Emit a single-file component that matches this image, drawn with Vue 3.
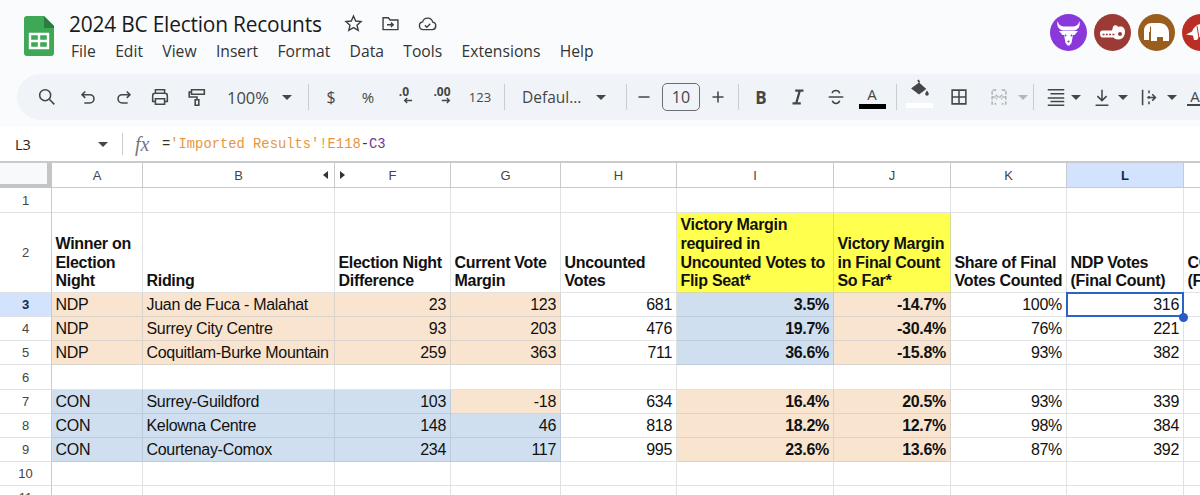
<template>
  <div class="page">
    <header class="top">
      <svg class="logo" viewBox="0 0 30 40">
        <path d="M3 0h17l10 10v27a3 3 0 0 1-3 3H3a3 3 0 0 1-3-3V3a3 3 0 0 1 3-3z" fill="#3fa856" />
        <path d="M20 0l10 10v2H20z" fill="#2a7d40" />
        <path d="M6 18h18v14H6z" fill="none" stroke="#fff" stroke-width="2.4" />
        <path d="M6 25h18M15 18v14" stroke="#fff" stroke-width="2.4" />
      </svg>
      <div class="doc">
        <div class="title-row">
          <span class="title">2024 BC Election Recounts</span>
          <svg class="doc-icon first" viewBox="0 0 24 24"><path d="M12 3.5l2.5 5.7 6.1.6-4.6 4.1 1.4 6-5.4-3.2-5.4 3.2 1.4-6-4.6-4.1 6.1-.6z" /></svg>
          <svg class="doc-icon" viewBox="0 0 24 24"><path d="M3.5 19V5.5h6l2 2.5h9v11zM8 13.5h7M12.5 11l2.6 2.5-2.6 2.5" /></svg>
          <svg class="doc-icon" viewBox="0 0 24 24"><path d="M7 19a4.5 4.5 0 0 1-.6-8.9A6 6 0 0 1 18 10.5a4.3 4.3 0 0 1-.5 8.500zM9 14l2.200 2.200 4-4" /></svg>
        </div>
        <nav class="menu">
          <span v-for="item in menuItems" :key="item">{{ item }}</span>
        </nav>
      </div>
      <div class="avatars">
        <span class="avatar bull">
          <svg viewBox="0 0 37 37">
            <path d="M7.500 7c-1 5 1 9 6 9.500h10c5-.5 7-4.500 6-9.500-1 3.500-3 5-6 5.500h-10c-3-.5-5-2-6-5.500z" fill="#fff" />
            <path d="M9 17h19l-3.500 4h-1.500l-1.500 8-2 2.500h-2l-2-2.500-1.500-8h-1.500z" fill="#fff" />
            <circle cx="15.500" cy="21.500" r="1" fill="#8a38dc" />
            <circle cx="21.500" cy="21.500" r="1" fill="#8a38dc" />
            <circle cx="18.500" cy="27.500" r="1.100" fill="#8a38dc" />
          </svg>
        </span>
        <span class="avatar croc">
          <svg viewBox="0 0 37 37">
            <path d="M6 19c0-1.500 1-2.500 2.500-2.500H18l1-3.500c.5-2 3-2.500 4.500-1l1 1c3-1.500 6.500.5 6.500 4.500 0 5-3 8-6.500 8-2.500 0-4-1-5-2H8.500C7 24 6 22 6 19z" fill="#fff" />
            <path d="M8.500 20.500h13" stroke="#9c3a35" stroke-width="1.600" stroke-dasharray="2 1.300" />
            <circle cx="26" cy="20" r="2" fill="#9c3a35" />
          </svg>
        </span>
        <span class="avatar eleph">
          <svg viewBox="0 0 37 37">
            <path d="M6 26V17c0-5 3-8 8-8h7c6 0 10 4 10 10v8h-6v-4h-6v4h-6v-9h-2v8z" fill="#fff" />
            <path d="M12.500 12.500v6" stroke="#9b5d1e" stroke-width="1.100" />
          </svg>
        </span>
        <span class="avatar arma">
          <svg viewBox="0 0 37 37">
            <path d="M4 20.500l6-3c2-5 6-8 12-8 6 0 10 4 11 11l-3 5.500h-3l-2-3h-8l-2 3h-3l-1-4.500z" fill="#fff" />
            <path d="M15 12l2 12M21 10.500l1 13" stroke="#b92f25" stroke-width="1" />
          </svg>
        </span>
      </div>
    </header>

    <div class="toolbar">
      <span class="tb after5"><svg viewBox="0 0 24 24"><circle cx="10" cy="10" r="6" /><path d="M14.500 14.500L20 20" /></svg></span>
      <span class="tb"><svg viewBox="0 0 24 24"><path d="M9 6L5.500 9.500 9 13M5.500 9.500H14a4.500 4.500 0 0 1 0 9H8" /></svg></span>
      <span class="tb"><svg viewBox="0 0 24 24"><path d="M15 6l3.500 3.500L15 13M18.500 9.500H10a4.500 4.500 0 0 0 0 9h6" /></svg></span>
      <span class="tb"><svg viewBox="0 0 24 24"><path d="M7 8V4h10v4M7 17H4v-6.500A2.500 2.500 0 0 1 6.500 8h11a2.500 2.500 0 0 1 2.500 2.500V17h-3M7 14h10v6H7z" /></svg></span>
      <span class="tb after1"><svg viewBox="0 0 24 24"><path d="M6 4h14v5H6zM6 6.500H3.500V12H12v3M10 15h4v6h-4z" /></svg></span>
      <span class="zoom"><span>100%</span><i class="caret"></i></span>
      <i class="sep"></i>
      <span class="tb txt dollar">$</span>
      <span class="tb txt pct">%</span>
      <span class="tb dec">
        <b>.0</b>
        <svg viewBox="0 0 12 8"><path d="M11 4H2M5 1L2 4l3 3" /></svg>
      </span>
      <span class="tb dec dec2">
        <b>.00</b>
        <svg viewBox="0 0 12 8"><path d="M1 4h9M7 1l3 3-3 3" /></svg>
      </span>
      <span class="tb txt num123">123</span>
      <i class="sep wide"></i>
      <span class="font-pick"><span>Defaul...</span><i class="caret"></i></span>
      <i class="sep"></i>
      <span class="tb narrow"><svg viewBox="0 0 24 24"><path d="M6 12h12" /></svg></span>
      <span class="size">10</span>
      <span class="tb plus"><svg viewBox="0 0 24 24"><path d="M6 12h12M12 6v12" /></svg></span>
      <i class="sep"></i>
      <span class="tb txt bold-b">B</span>
      <span class="tb italic"><svg class="heavy" viewBox="0 0 24 24"><path d="M9 5h9M6 19h9M14 5l-4 14" /></svg></span>
      <span class="tb strike"><svg viewBox="0 0 24 24"><path d="M4 12h16M16 8c-.5-2-2-3-4-3s-4 1-4 3M8 16c.5 2 2 3 4 3s3.500-1 4-3" /></svg></span>
      <span class="tb text-color"><span>A</span><i></i></span>
      <i class="sep wide"></i>
      <span class="tb fill">
        <svg viewBox="0 0 24 20"><path d="M11 1l1.500 2.500M5.500 9.500L12 4.500l6 5.500-6 4.500z" fill="#444746" /><path d="M20 11.500c1 1.500 1.800 2.500 1.800 3.500a1.800 1.800 0 0 1-3.600 0c0-1 .8-2 1.800-3.500z" fill="#444746" stroke="none" /></svg>
        <i></i>
      </span>
      <span class="tb gap4"><svg viewBox="0 0 24 24"><path d="M4.500 4.500h15v15h-15zM12 4.500v15M4.500 12h15" /></svg></span>
      <span class="tb off"><svg viewBox="0 0 24 24"><path d="M9 4.500H4.500v15H9M15 4.500h4.500v15H15M4.500 12H11M8.500 9.500L11 12l-2.500 2.500M19.500 12H13M15.500 9.500L13 12l2.500 2.500" stroke-dasharray="4 1.500" /></svg></span>
      <i class="caret off-caret"></i>
      <i class="sep"></i>
      <span class="tb align"><svg viewBox="0 0 24 24"><path d="M3 4h18M6 8.500h15M3 13h18M6 17h15M3 21h18" /></svg></span>
      <i class="caret after-align"></i>
      <span class="tb mid"><svg viewBox="0 0 24 24"><path d="M12 4v12M7 11l5 5 5-5M5 21h14" /></svg></span>
      <i class="caret"></i>
      <span class="tb mid wrap-icon"><svg viewBox="0 0 24 24"><path d="M5 4v17M12 5v3M12 11v3M12 17v3M10 12.500h9M15.500 9l3.500 3.500-3.500 3.500" /></svg></span>
      <i class="caret after-wrap"></i>
      <span class="tb text-rotate"><span>A</span><i></i></span>
    </div>

    <div class="formula">
      <span class="name-box">L3</span>
      <i class="caret"></i>
      <i class="sep"></i>
      <span class="fx">fx</span>
      <code class="expr">=<span class="str">'Imported Results'!E118</span>-<span class="ref">C3</span></code>
    </div>

    <div class="sheet">
      <div class="grid">
        <div class="corner"></div>
        <div
          v-for="col in columns"
          :key="col"
          class="col-head"
          :class="{ picked: col === 'L' }"
        >
          {{ col }}
          <i v-if="col === 'B'" class="hide-arrow left"></i>
          <i v-if="col === 'F'" class="hide-arrow right"></i>
        </div>

        <template v-for="row in rows" :key="row.num">
          <div class="row-head" :class="{ picked: row.num === 3 }">{{ row.num }}</div>
          <div
            v-for="(cell, i) in row.cells"
            :key="i"
            class="cell"
            :class="cellClasses(row, cell, i)"
          >
            <span>{{ cell.text }}</span>
            <template v-if="row.num === 3 && i === 8">
              <i class="selection"></i>
              <i class="handle"></i>
            </template>
          </div>
        </template>
      </div>
    </div>
  </div>
</template>

<script setup>
const menuItems = ['File', 'Edit', 'View', 'Insert', 'Format', 'Data', 'Tools', 'Extensions', 'Help']

const columns = ['A', 'B', 'F', 'G', 'H', 'I', 'J', 'K', 'L', 'M']

const empty = (num) => ({
  num,
  cells: columns.map(() => ({ text: '' })),
})

const header = [
  'Winner on Election Night',
  'Riding',
  'Election Night Difference',
  'Current Vote Margin',
  'Uncounted Votes',
  'Victory Margin required in Uncounted Votes to Flip Seat*',
  'Victory Margin in Final Count So Far*',
  'Share of Final Votes Counted',
  'NDP Votes (Final Count)',
  'CON Votes (Final Count)',
]

// o = orange, b = blue, - = no fill
const dataRow = (num, values, fills) => ({
  num,
  cells: columns.map((_, i) => ({
    text: values[i] ?? '',
    fill: { o: 'orange', b: 'blue' }[fills[i]],
  })),
})

const rows = [
  empty(1),
  {
    num: 2,
    head: true,
    cells: header.map((text, i) => ({ text, fill: i === 5 || i === 6 ? 'yellow' : undefined })),
  },
  dataRow(3, ['NDP', 'Juan de Fuca - Malahat', '23', '123', '681', '3.5%', '-14.7%', '100%', '316'], 'oooo-bo---'),
  dataRow(4, ['NDP', 'Surrey City Centre', '93', '203', '476', '19.7%', '-30.4%', '76%', '221'], 'oooo-bo---'),
  dataRow(5, ['NDP', 'Coquitlam-Burke Mountain', '259', '363', '711', '36.6%', '-15.8%', '93%', '382'], 'oooo-bo---'),
  empty(6),
  dataRow(7, ['CON', 'Surrey-Guildford', '103', '-18', '634', '16.4%', '20.5%', '93%', '339'], 'bbbo-oo---'),
  dataRow(8, ['CON', 'Kelowna Centre', '148', '46', '818', '18.2%', '12.7%', '98%', '384'], 'bbbb-oo---'),
  dataRow(9, ['CON', 'Courtenay-Comox', '234', '117', '995', '23.6%', '13.6%', '87%', '392'], 'bbbb-oo---'),
  empty(10),
  empty(11),
]

const cellClasses = (row, cell, i) => [
  cell.fill,
  {
    head: row.head,
    right: !row.head && i > 1,
    strong: !row.head && (i === 5 || i === 6),
  },
]
</script>

<style>
html,
body {
  margin: 0;
  height: 495px;
  overflow: hidden;
  background: #fff;
}
</style>

<style scoped>
.page {
  width: 1200px;
  height: 495px;
  overflow: hidden;
  background: #f9fbfd;
  font-family: "Liberation Sans", Arial, sans-serif;
  color: #111;
}

.top {
  display: flex;
  height: 74px;
  padding-left: 24px;
  box-sizing: border-box;
  overflow: hidden;
}

.logo {
  width: 30px;
  height: 40px;
  margin-top: 16px;
  flex: none;
}

.doc {
  flex: none;
  width: 981px;
  margin-left: 15px;
  box-sizing: border-box;
  padding-top: 8px;
}

.title-row {
  display: flex;
  align-items: center;
  height: 31px;
}

.title {
  font-family: "Open Sans", sans-serif;
  font-size: 20.900px;
  letter-spacing: -0.200px;
  color: #1a1a1a;
}

.doc-icon {
  width: 21px;
  height: 21px;
  margin-right: 16px;
  fill: none;
  stroke: #3c4043;
  stroke-width: 1.600;
}

.doc-icon.first {
  margin-left: 21px;
}

.menu {
  display: flex;
  gap: 19.300px;
  margin-top: 1px;
  padding-left: 2px;
  font-family: "Open Sans", sans-serif;
  font-size: 15.700px;
  line-height: 22px;
  color: #333;
}

.avatars {
  display: flex;
  gap: 7px;
  margin-top: 14px;
  flex: none;
}

.avatar {
  width: 37px;
  height: 37px;
  border-radius: 50%;
  flex: none;
}

.avatar svg {
  display: block;
}

.bull { background: #8a38dc; }
.croc { background: #9c3a35; }
.eleph { background: #9b5d1e; }
.arma { background: #b92f25; }

.toolbar {
  display: flex;
  align-items: center;
  height: 46px;
  margin-left: 17px;
  padding-left: 12px;
  border-radius: 23px 0 0 23px;
  background: #f0f4f8;
  color: #444746;
  white-space: nowrap;
  overflow: hidden;
}

.tb {
  display: flex;
  flex: none;
  align-items: center;
  justify-content: center;
  width: 36px;
  height: 30px;
  position: relative;
}

.tb svg {
  width: 22px;
  height: 22px;
  fill: none;
  stroke: #444746;
  stroke-width: 1.700;
}

.tb svg.heavy {
  stroke-width: 2.400;
}

.after5 { margin-right: 5px; }
.after1 { margin-left: 1px; }

.zoom {
  display: flex;
  flex: none;
  align-items: center;
  width: 89px;
  box-sizing: border-box;
  padding-left: 12px;
  font-family: "Open Sans", sans-serif;
  font-size: 16.500px;
}

.zoom .caret {
  margin-left: 13px;
}

.caret {
  display: inline-block;
  flex: none;
  width: 0;
  height: 0;
  border-left: 5px solid transparent;
  border-right: 5px solid transparent;
  border-top: 5px solid #444746;
}

.off-caret {
  border-top-color: #b5b8bb;
  margin-left: 1px;
  margin-right: 1px;
}

.after-align { margin-left: -1px; }
.after-wrap { margin-left: 2px; }

.sep {
  flex: none;
  width: 1px;
  height: 26px;
  margin-left: 4px;
  background: #c9ccd0;
}

.sep.wide {
  margin-left: 6px;
}

.txt {
  font-family: "Open Sans", sans-serif;
}

.dollar {
  margin-left: 4px;
  font-size: 16px;
}

.pct {
  margin-left: 1px;
  font-size: 15px;
}

.dec {
  flex-direction: column;
  line-height: 12px;
}

.dec b {
  font-family: "Open Sans", sans-serif;
  font-size: 12px;
  margin-top: -5px;
}

.dec svg {
  width: 10px;
  height: 7px;
  margin-left: 8px;
  margin-top: -1px;
}

.dec2 {
  margin-left: 2px;
}

.num123 {
  margin-left: 2px;
  font-size: 13px;
}

.font-pick {
  display: flex;
  flex: none;
  align-items: center;
  width: 117px;
  box-sizing: border-box;
  padding-left: 17px;
  font-family: "Open Sans", sans-serif;
  font-size: 15.500px;
}

.font-pick .caret {
  margin-left: 15px;
}

.narrow {
  width: 34px;
}

.plus {
  width: 33px;
}

.size {
  flex: none;
  width: 38px;
  height: 28px;
  box-sizing: border-box;
  border: 1px solid #6b6f73;
  border-radius: 5px;
  margin: 0 1px;
  text-align: center;
  font-family: "Open Sans", sans-serif;
  font-size: 16px;
  line-height: 26px;
}

.bold-b {
  margin-left: 4px;
  font-size: 17px;
  font-weight: 700;
}

.italic { margin-left: 1px; }
.strike { margin-left: 2px; }

.text-color {
  flex-direction: column;
  font-family: "Open Sans", sans-serif;
  font-size: 15px;
  line-height: 18px;
  height: 34px;
}

.text-color i {
  display: block;
  width: 27px;
  height: 5px;
  background: #000;
  margin-top: 1px;
}

.fill {
  flex-direction: column;
  margin-left: 4px;
  height: 36px;
  justify-content: flex-start;
}

.fill svg {
  width: 24px;
  height: 20px;
}

.fill i {
  display: block;
  width: 27px;
  height: 5px;
  background: #fff;
  margin-top: 4px;
}

.gap4 { margin-left: 4px; }

.off svg {
  stroke: #b5b8bb;
}

.off {
  margin-left: 4px;
}

.align {
  width: 32px;
  margin-left: 6px;
}

.mid {
  margin-left: 5px;
  width: 32px;
}

.wrap-icon {
  margin-left: 5px;
}

.text-rotate {
  flex-direction: column;
  font-family: "Open Sans", sans-serif;
  font-size: 15px;
  line-height: 16px;
}

.text-rotate i {
  display: block;
  width: 16px;
  height: 1.500px;
  background: #444746;
}

.formula {
  display: flex;
  align-items: center;
  height: 34px;
  margin-top: 7px;
  background: #fff;
  padding-left: 15px;
  color: #444746;
}

.name-box {
  width: 83px;
  font-family: "Open Sans", "Liberation Sans", sans-serif;
  font-size: 14.500px;
  color: #222;
}

.formula .sep {
  margin-left: 14px;
  height: 22px;
}

.fx {
  margin-left: 12px;
  width: 27px;
  font-family: "Liberation Serif", serif;
  font-style: italic;
  font-size: 20px;
  color: #777;
}

.expr {
  font-family: "Liberation Mono", monospace;
  font-size: 13.800px;
  color: #333;
}

.str { color: #e8963e; }
.ref { color: #6b3a93; }

.sheet {
  border-top: 2px solid #c9cacb;
  background: #fff;
  box-sizing: border-box;
  height: 336px;
  overflow: hidden;
}

.grid {
  display: grid;
  grid-template-columns: 52px 91px 192px 116px 110px 116px 157px 117px 116px 117px 120px;
  grid-template-rows: 25px 25px 80px 24px 24px 24px 25px 24px 24px 24px 24px 24px;
  width: 1236px;
}

.corner {
  box-sizing: border-box;
  border-right: 5px solid #c4c5c6;
  border-bottom: 4px solid #c4c5c6;
  background: #f8f9fa;
}

.col-head,
.row-head {
  display: flex;
  align-items: center;
  justify-content: center;
  position: relative;
  box-sizing: border-box;
  font-size: 13px;
  color: #444;
  background: #fff;
}

.col-head {
  border-right: 1px solid #c9cacb;
  border-bottom: 1px solid #c9cacb;
}

.row-head {
  border-right: 1px solid #c9cacb;
  border-bottom: 1px solid #dfe0e1;
}

.col-head.picked,
.row-head.picked {
  background: #d3e3fd;
  font-weight: 700;
  color: #0b2a5c;
}

.hide-arrow {
  position: absolute;
  top: 8px;
  width: 0;
  height: 0;
  border-top: 4px solid transparent;
  border-bottom: 4px solid transparent;
}

.hide-arrow.left {
  right: 6px;
  border-right: 5px solid #333;
}

.hide-arrow.right {
  left: 5px;
  border-left: 5px solid #333;
}

.cell {
  position: relative;
  display: flex;
  align-items: center;
  box-sizing: border-box;
  min-width: 0;
  padding: 0 4px 0 3.500px;
  border-right: 1px solid #e1e2e3;
  border-bottom: 1px solid #e1e2e3;
  font-size: 16px;
  letter-spacing: -0.300px;
  line-height: 18px;
  color: #111;
  white-space: nowrap;
}

.cell.right {
  justify-content: flex-end;
}

.cell.strong {
  font-weight: 700;
}

.cell.head {
  align-items: flex-end;
  padding-right: 1px;
  padding-bottom: 1px;
  font-weight: 700;
  line-height: 18.700px;
  white-space: normal;
}

.cell.orange {
  background: #f9e4d0;
  border-color: #d9d3cb;
}

.cell.blue {
  background: #cfdff0;
  border-color: #bccbdb;
}

.cell.yellow {
  background: #ffff4d;
  border-color: #d8d8a0;
}

.selection {
  position: absolute;
  inset: -1px -1px -1px -1px;
  border: 2px solid #2a63c6;
}

.handle {
  position: absolute;
  right: -5px;
  bottom: -6px;
  width: 9px;
  height: 9px;
  border-radius: 50%;
  background: #2a5bc4;
  z-index: 2;
}
</style>
